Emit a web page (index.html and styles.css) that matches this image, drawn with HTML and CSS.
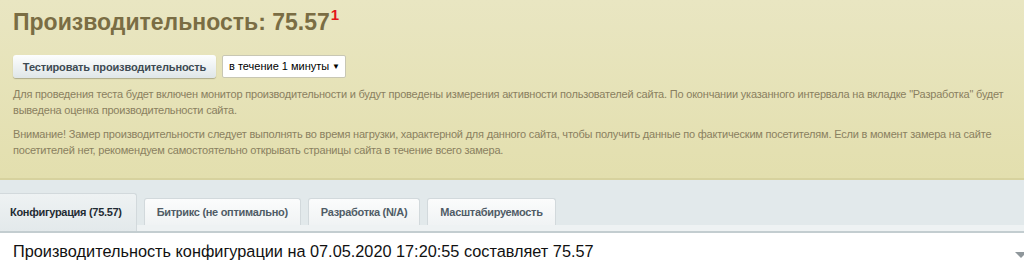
FILE: index.html
```html
<!DOCTYPE html>
<html lang="ru">
<head>
  <meta charset="UTF-8" />
  <title>Производительность</title>
  <link rel="stylesheet" href="styles.css">
</head>
<body>
  <div class="notice">
    <h1 class="title">Производительность: 75.57<sup>1</sup></h1>

    <div class="controls">
      <button class="test-button">Тестировать производительность</button>
      <div class="period-select">в течение 1 минуты <span class="arrow">&#9660;</span></div>
    </div>

    <p>Для проведения теста будет включен монитор производительности и будут проведены измерения активности пользователей сайта. По окончании указанного интервала на вкладке "Разработка" будет выведена оценка производительности сайта.</p>
    <p>Внимание! Замер производительности следует выполнять во время нагрузки, характерной для данного сайта, чтобы получить данные по фактическим посетителям. Если в момент замера на сайте посетителей нет, рекомендуем самостоятельно открывать страницы сайта в течение всего замера.</p>
  </div>

  <div class="tabs">
    <div class="tab active">Конфигурация (75.57)</div>
    <div class="tab">Битрикс (не оптимально)</div>
    <div class="tab">Разработка (N/A)</div>
    <div class="tab">Масштабируемость</div>
  </div>

  <div class="content">
    <div class="summary">Производительность конфигурации на 07.05.2020 17:20:55 составляет 75.57</div>
    <span class="collapse"></span>
  </div>
</body>
</html>
```

FILE: styles.css
```css
body {
  margin: 0;
  font-family: "Liberation Sans", Arial, sans-serif;
  background: #fff;
}
.notice {
  background: linear-gradient(to bottom, #e9e6c2, #e3dfae);
  border-bottom: 2px solid #d7d29e;
  padding: 7px 13px 11px;
  height: 160px;
}
.title {
  margin: 0;
  font-size: 23px;
  font-weight: bold;
  color: #7a6d44;
  line-height: 30px;
}
.title sup {
  color: #e3151a;
  font-size: 15px;
  vertical-align: 0;
  position: relative;
  top: -10px;
  margin-left: 1px;
}
.controls {
  display: flex;
  gap: 6px;
  margin-top: 15px;
}
.test-button {
  height: 23px;
  width: 203px;
  padding: 0;
  border: none;
  border-radius: 3px;
  background: linear-gradient(to bottom, #fdfefe, #dfe6e8);
  box-shadow: 0 1px 1px rgba(0, 0, 0, 0.25);
  color: #3d4a52;
  font-family: "Liberation Sans", Arial, sans-serif;
  font-size: 11px;
  font-weight: bold;
  letter-spacing: -0.15px;
}
.period-select {
  height: 21px;
  width: 116px;
  box-sizing: content-box;
  border: 1px solid #c8c7b4;
  border-radius: 2px;
  background: #fff;
  font-size: 11px;
  line-height: 21px;
  color: #000;
  padding-left: 6px;
  position: relative;
}
.arrow {
  position: absolute;
  right: 5px;
  font-size: 8px;
}
.notice p {
  margin: 8px 0 0;
  font-size: 11px;
  letter-spacing: -0.2px;
  line-height: 16px;
  color: #8a8060;
}
.notice p + p {
  margin-top: 8px;
}
.tabs {
  display: flex;
  align-items: flex-end;
  gap: 7px;
  height: 45px;
  background: #e2e9eb;
  border-bottom: 6px solid #eef2f3;
  box-shadow: 0 2px 0 #c3cdd0;
}
.tab {
  height: 27px;
  line-height: 27px;
  padding: 0 12px;
  border: 1px solid #d2d9dc;
  border-bottom: none;
  border-radius: 3px 3px 0 0;
  background: linear-gradient(to bottom, #fbfcfc, #f0f3f4);
  color: #505c66;
  font-size: 11px;
  font-weight: bold;
  letter-spacing: -0.3px;
  box-sizing: border-box;
}
.tab.active {
  padding: 0 14px 0 10px;
  border-left: none;
  border-top-left-radius: 0;
  background: linear-gradient(to bottom, #eef2f3, #e3e9eb);
  color: #1f2b33;
  margin-bottom: -6px;
  height: 38px;
  line-height: 36px;
}
.content {
  display: flex;
  justify-content: space-between;
  align-items: center;
  padding: 11px 0 0 13px;
}
.summary {
  font-size: 16.3px;
  color: #111;
}
.collapse {
  width: 0;
  height: 0;
  border-left: 6px solid transparent;
  border-right: 6px solid transparent;
  border-top: 6px solid #8f979b;
  margin-right: -3px;
  margin-top: 6px;
}
```
